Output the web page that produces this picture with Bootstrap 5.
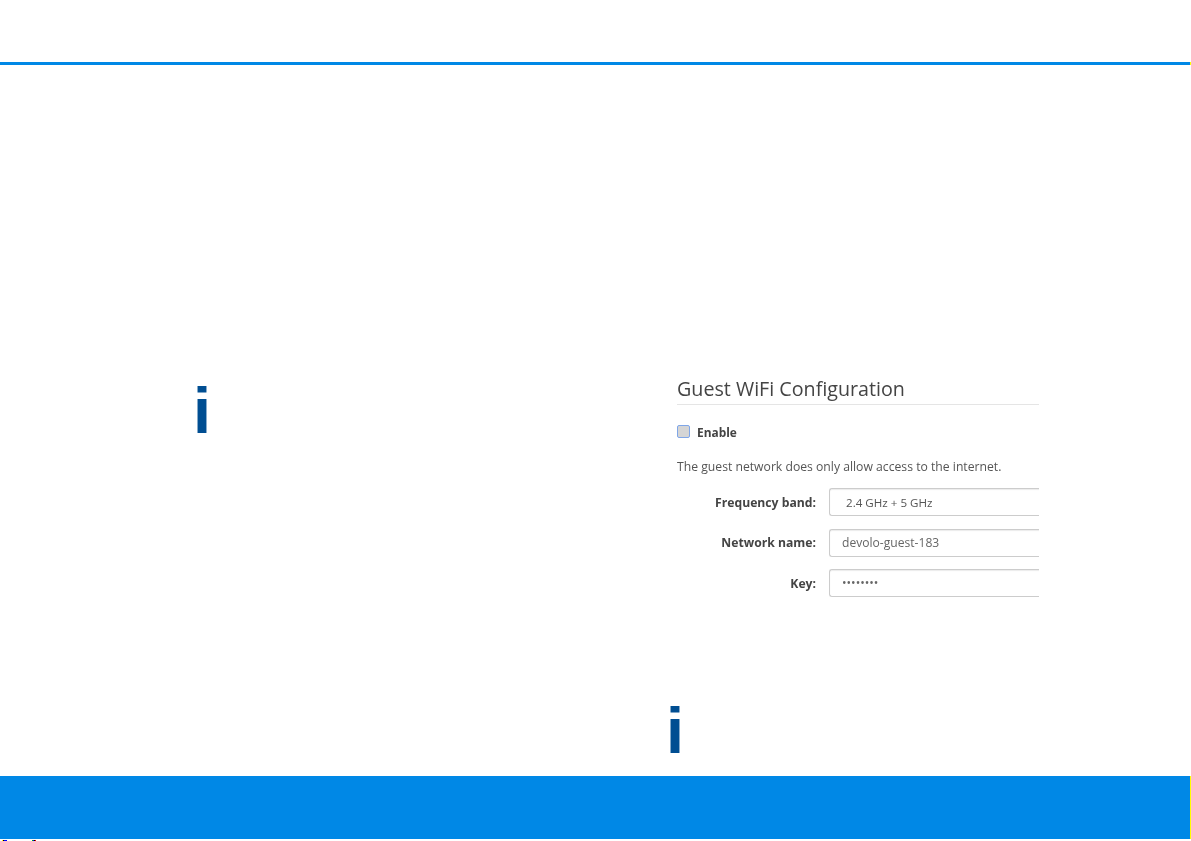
<!DOCTYPE html>
<html lang="en">
<head>
<meta charset="utf-8">
<title>Guest WiFi Configuration</title>
<link href="https://cdn.jsdelivr.net/npm/bootstrap@5.3.0/dist/css/bootstrap.min.css" rel="stylesheet">
<style>
html,body{height:100%;margin:0;background:#fff;overflow:hidden}
.pg{height:841px;width:1191px}
.rule-top{height:66px;flex:none}
.rule-line{margin-top:auto;height:3px;margin-bottom:1px;background:#0088e6;border-right:1px solid #ff0}
.body-area{flex:1 1 auto;min-height:0}
.col-l{width:193px;flex:none}
.col-m{width:477px;flex:none}
.info-i{font:700 65px/1 "Liberation Sans",sans-serif;color:#004e92;display:block}
.info-a{margin-top:312px}
.info-b{margin-top:88px;margin-left:-4px}
.shot{width:362px;margin-left:7px;margin-top:310px;font-family:"Open Sans",sans-serif;color:#555;overflow:hidden;filter:blur(.3px)}
.shot-h{font-size:19.7px;font-weight:400;line-height:26px;color:#444;margin:0;padding-bottom:2px;border-bottom:1px solid #e5e5e5;white-space:nowrap}
.shot-check{margin-top:19px;height:14px}
.cb{width:13px;height:13px;border:1.5px solid #7fa6e8;border-radius:2px;background:#d5d5d5;flex:none}
.shot-check label{font-size:11.9px;font-weight:700;color:#444;line-height:14px;margin-left:7px;padding-top:2px}
.shot-p{font-size:12.2px;line-height:16px;margin:21px 0 13px;white-space:nowrap}
.f-row{height:28px;margin-bottom:12.5px}
.f-lab{width:139px;flex:none;text-align:right;font-size:12.2px;font-weight:700;color:#444;white-space:nowrap;padding-top:2px}
.f-box{margin-left:13px;width:240px;flex:none;height:28px;border:1px solid #ccc;border-radius:3px;border-right:0;border-top-right-radius:0;border-bottom-right-radius:0;font-size:12.1px;color:#666;padding-left:12px;line-height:26px;box-shadow:inset 0 1px 1px rgba(0,0,0,.08)}
.f-sel{padding-left:16px;color:#555;font-size:11.6px;line-height:27px}
.foot-bar{height:63px;flex:none;background:#0088e6;border-right:1px solid #ff0}
.strip{height:2px;flex:none}
.specks{height:1px;margin-top:1px;padding-left:2px}
.sp{width:1px;height:1px;flex:none}
.sp-gap{width:25px;flex:none}
.c-y{background:#ff0}.c-k{background:#000}.c-b{background:#00f}.c-g{background:#0c0}.c-r{background:#e00}
</style>
</head>
<body>
<div class="pg d-flex flex-column">
  <div class="rule-top d-flex flex-column"><div class="rule-line"></div></div>
  <div class="body-area d-flex">
    <div class="col-l"></div>
    <div class="col-m"><span class="info-i info-a">i</span></div>
    <div>
      <div class="shot">
        <h2 class="shot-h">Guest WiFi Configuration</h2>
        <div class="shot-check d-flex align-items-center"><span class="cb"></span><label>Enable</label></div>
        <p class="shot-p">The guest network does only allow access to the internet.</p>
        <div class="f-row d-flex align-items-center"><div class="f-lab">Frequency band:</div><div class="f-box f-sel">2.4 GHz + 5 GHz</div></div>
        <div class="f-row d-flex align-items-center"><div class="f-lab">Network name:</div><div class="f-box">devolo-guest-183</div></div>
        <div class="f-row d-flex align-items-center"><div class="f-lab">Key:</div><div class="f-box">••••••••</div></div>
      </div>
      <span class="info-i info-b">i</span>
    </div>
  </div>
  <div class="foot-bar"></div>
  <div class="strip"><div class="specks d-flex">
    <span class="sp c-y"></span><span class="sp c-k"></span><span class="sp c-b"></span><span class="sp c-b"></span><span class="sp c-b"></span>
    <span class="sp-gap"></span>
    <span class="sp c-g"></span><span class="sp c-b"></span><span class="sp c-k"></span><span class="sp c-r"></span>
  </div></div>
</div>
<script src="https://cdn.jsdelivr.net/npm/bootstrap@5.3.0/dist/js/bootstrap.bundle.min.js"></script>
</body>
</html>
